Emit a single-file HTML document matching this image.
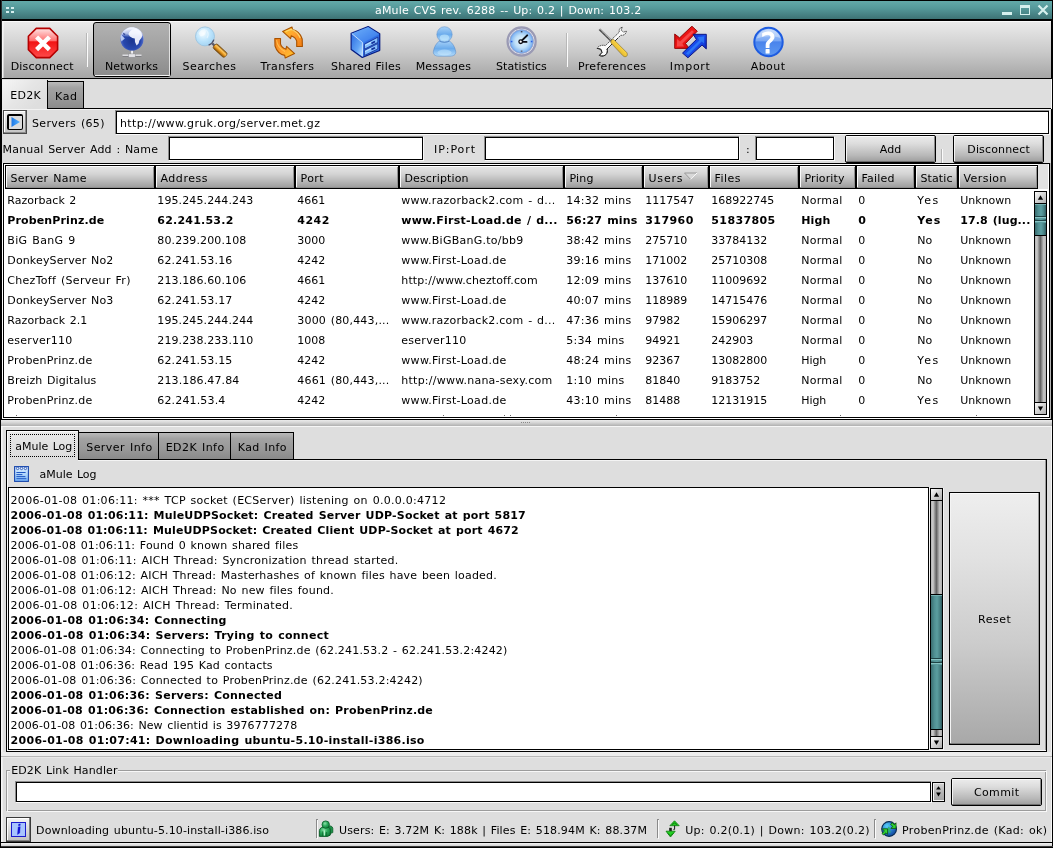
<!DOCTYPE html>
<html><head><meta charset="utf-8"><title>aMule CVS rev. 6288</title>
<style>
html,body{margin:0;padding:0;background:#000;overflow:hidden}
#w{position:relative;will-change:transform;width:1053px;height:848px;overflow:hidden;font-family:"DejaVu Sans","Liberation Sans",sans-serif;font-size:11px;line-height:13px;color:#000}
#w div,#w span.t,#w svg{position:absolute}
#w span.t{white-space:pre;height:13px}
</style></head><body><div id="w">
<div style="left:0px;top:0px;width:1053px;height:848px;background:#000"></div>
<div style="left:2px;top:1px;width:1050px;height:18px;background:linear-gradient(#63a9a9,#55999a 40%,#3d7375)"></div>
<div style="left:6px;top:7px;width:3px;height:2px;background:#d4eeee"></div>
<div style="left:6px;top:11px;width:3px;height:2px;background:#d4eeee"></div>
<div style="left:11px;top:7px;width:3px;height:2px;background:#d4eeee"></div>
<div style="left:11px;top:11px;width:3px;height:2px;background:#d4eeee"></div>
<span class="t" style="left:375.00px;top:4px;letter-spacing:0.187px;word-spacing:1.0px;color:#fff;">aMule CVS rev. 6288 -- Up: 0.2 | Down: 103.2</span>
<div style="left:1002px;top:12px;width:10px;height:3px;background:#d6f0ee"></div>
<div style="left:1020px;top:5px;width:10px;height:10px;box-sizing:border-box;border:1px solid #d6f0ee;border-top-width:3px"></div>
<svg style="left:1037px;top:4px" width="12" height="12" viewBox="0 0 12 12"><path d="M1.5 1.5 L10.5 10.5 M10.5 1.5 L1.5 10.5" stroke="#d6f0ee" stroke-width="2.2" fill="none"/></svg>
<div style="left:2px;top:21px;width:1049px;height:57px;background:linear-gradient(#ebebeb,#e2e2e2 15%,#c9c9c9 55%,#a6a6a6)"></div>
<div style="left:2px;top:21px;width:1049px;height:1px;background:#fafafa"></div>
<div style="left:2px;top:21px;width:1px;height:57px;background:#f4f4f4"></div>
<div style="left:3px;top:22px;width:1px;height:56px;background:rgba(255,255,255,.45)"></div>
<div style="left:1px;top:79px;width:1051px;height:763px;background:#dedede"></div>
<div style="left:1051px;top:79px;width:1px;height:30px;background:#f8f8f8"></div>
<div style="left:1052px;top:79px;width:1px;height:763px;background:#000"></div>
<div style="left:1px;top:79px;width:1px;height:341px;background:#000"></div>
<div style="left:1051px;top:109px;width:1px;height:311px;background:#000"></div>
<div style="left:1051px;top:21px;width:1px;height:58px;background:#000"></div>
<div style="left:93px;top:22px;width:78px;height:55px;box-sizing:border-box;border:1px solid #000;border-radius:3px;background:linear-gradient(#b2b2b2,#a0a0a0 50%,#8b8b8b)"></div>
<div style="left:95px;top:75px;width:74px;height:1px;background:#f2f2f2"></div>
<div style="left:169px;top:24px;width:1px;height:52px;background:#e0e0e0"></div>
<div style="left:86px;top:33px;width:1px;height:34px;background:#b8b8b8"></div>
<div style="left:87px;top:33px;width:1px;height:34px;background:#fbfbfb"></div>
<div style="left:566px;top:33px;width:1px;height:34px;background:#b8b8b8"></div>
<div style="left:567px;top:33px;width:1px;height:34px;background:#fbfbfb"></div>
<span class="t" style="left:10.70px;top:60px;letter-spacing:0.199px;">Disconnect</span>
<span class="t" style="left:104.90px;top:60px;letter-spacing:0.204px;">Networks</span>
<span class="t" style="left:182.50px;top:60px;letter-spacing:0.446px;">Searches</span>
<span class="t" style="left:260.60px;top:60px;letter-spacing:0.431px;">Transfers</span>
<span class="t" style="left:330.90px;top:60px;letter-spacing:0.275px;word-spacing:0.5px;">Shared Files</span>
<span class="t" style="left:415.70px;top:60px;letter-spacing:0.180px;">Messages</span>
<span class="t" style="left:496.10px;top:60px;letter-spacing:0.045px;">Statistics</span>
<span class="t" style="left:577.90px;top:60px;letter-spacing:0.340px;">Preferences</span>
<span class="t" style="left:669.80px;top:60px;letter-spacing:0.717px;">Import</span>
<span class="t" style="left:750.70px;top:60px;letter-spacing:0.442px;">About</span>
<div style="left:2px;top:80px;width:45px;height:29px;background:linear-gradient(135deg,#f6f6f6,#e6e6e6 45%,#dedede 80%)"></div>
<div style="left:47px;top:81px;width:37px;height:28px;box-sizing:border-box;border:1px solid #000;border-bottom:none;background:linear-gradient(#bababa,#a2a2a2 22%,#999 60%,#8a8a8a)"></div>
<div style="left:47px;top:80px;width:1px;height:29px;background:#000"></div>
<div style="left:47px;top:108px;width:1004px;height:1px;background:#000"></div>
<div style="left:2px;top:109px;width:1049px;height:1px;background:#f2f2f2"></div>
<span class="t" style="left:10.20px;top:89px;letter-spacing:0.286px;">ED2K</span>
<span class="t" style="left:55.00px;top:90px;letter-spacing:0.625px;">Kad</span>
<div style="left:3px;top:110px;width:24px;height:24px;box-sizing:border-box;border:1px solid #4a4a4a;background:linear-gradient(#f0f0f0,#c4c4c4)"></div>
<div style="left:4px;top:111px;width:22px;height:1px;background:#fff"></div>
<div style="left:4px;top:111px;width:1px;height:22px;background:#fff"></div>
<div style="left:4px;top:132px;width:22px;height:1px;background:#8c8c8c"></div>
<div style="left:25px;top:111px;width:1px;height:22px;background:#8c8c8c"></div>
<div style="left:7px;top:114px;width:16px;height:16px;box-sizing:border-box;background:#dcdcdc;border:1px solid #000;border-top-width:2px;border-left-width:2px;border-radius:2px"></div>
<svg style="left:10px;top:116px" width="12" height="12" viewBox="0 0 12 12"><defs><linearGradient id="pl" x1="0" y1="0" x2="1" y2="0"><stop offset="0" stop-color="#1e78e6"/><stop offset="1" stop-color="#58b4ff"/></linearGradient></defs><path d="M1.5 1 L10 6 L1.5 11 Z" fill="url(#pl)"/></svg>
<span class="t" style="left:32.00px;top:117px;letter-spacing:0.328px;word-spacing:1.0px;">Servers (65)</span>
<div style="left:115px;top:110px;width:934px;height:1px;background:#8c8c8c"></div>
<div style="left:115px;top:110px;width:1px;height:24px;background:#8c8c8c"></div>
<div style="left:116px;top:134px;width:934px;height:1px;background:#f8f8f8"></div>
<div style="left:1049px;top:111px;width:1px;height:24px;background:#f8f8f8"></div>
<div style="left:116px;top:111px;width:933px;height:23px;box-sizing:border-box;background:#fff;border:1px solid #000"></div>
<span class="t" style="left:120.00px;top:117px;letter-spacing:0.355px;">http://www.gruk.org/server.met.gz</span>
<span class="t" style="left:2.60px;top:143px;letter-spacing:0.166px;word-spacing:1.0px;">Manual Server Add : Name</span>
<div style="left:168px;top:136px;width:255px;height:1px;background:#8c8c8c"></div>
<div style="left:168px;top:136px;width:1px;height:24px;background:#8c8c8c"></div>
<div style="left:169px;top:160px;width:255px;height:1px;background:#f8f8f8"></div>
<div style="left:423px;top:137px;width:1px;height:24px;background:#f8f8f8"></div>
<div style="left:169px;top:137px;width:254px;height:23px;box-sizing:border-box;background:#fff;border:1px solid #000"></div>
<span class="t" style="left:434.00px;top:143px;letter-spacing:0.932px;">IP:Port</span>
<div style="left:484px;top:136px;width:255px;height:1px;background:#8c8c8c"></div>
<div style="left:484px;top:136px;width:1px;height:24px;background:#8c8c8c"></div>
<div style="left:485px;top:160px;width:255px;height:1px;background:#f8f8f8"></div>
<div style="left:739px;top:137px;width:1px;height:24px;background:#f8f8f8"></div>
<div style="left:485px;top:137px;width:254px;height:23px;box-sizing:border-box;background:#fff;border:1px solid #000"></div>
<span class="t" style="left:746.00px;top:143px;letter-spacing:0.000px;">:</span>
<div style="left:755px;top:136px;width:79px;height:1px;background:#8c8c8c"></div>
<div style="left:755px;top:136px;width:1px;height:24px;background:#8c8c8c"></div>
<div style="left:756px;top:160px;width:79px;height:1px;background:#f8f8f8"></div>
<div style="left:834px;top:137px;width:1px;height:24px;background:#f8f8f8"></div>
<div style="left:756px;top:137px;width:78px;height:23px;box-sizing:border-box;background:#fff;border:1px solid #000"></div>
<div style="left:845px;top:135px;width:91px;height:28px;box-sizing:border-box;border:1px solid #000;border-radius:2px;background:linear-gradient(#ececec,#dcdcdc 30%,#b8b8b8 75%,#9c9c9c)"></div>
<div style="left:846px;top:136px;width:89px;height:1px;background:#fbfbfb"></div>
<div style="left:846px;top:136px;width:1px;height:26px;background:#f4f4f4"></div>
<div style="left:846px;top:161px;width:89px;height:1px;background:#6e6e6e"></div>
<div style="left:934px;top:136px;width:1px;height:26px;background:#8a8a8a"></div>
<span class="t" style="left:879.75px;top:143px;letter-spacing:0.094px;">Add</span>
<div style="left:941px;top:149px;width:1px;height:14px;background:#b4b4b4"></div>
<div style="left:942px;top:149px;width:1px;height:14px;background:#fbfbfb"></div>
<div style="left:953px;top:135px;width:91px;height:28px;box-sizing:border-box;border:1px solid #000;border-radius:2px;background:linear-gradient(#ececec,#dcdcdc 30%,#b8b8b8 75%,#9c9c9c)"></div>
<div style="left:954px;top:136px;width:89px;height:1px;background:#fbfbfb"></div>
<div style="left:954px;top:136px;width:1px;height:26px;background:#f4f4f4"></div>
<div style="left:954px;top:161px;width:89px;height:1px;background:#6e6e6e"></div>
<div style="left:1042px;top:136px;width:1px;height:26px;background:#8a8a8a"></div>
<span class="t" style="left:967.25px;top:143px;letter-spacing:0.155px;">Disconnect</span>
<div style="left:1px;top:162px;width:1px;height:258px;background:#000"></div>
<div style="left:1051px;top:162px;width:1px;height:258px;background:#000"></div>
<div style="left:2px;top:163px;width:1049px;height:256px;background:#fff"></div>
<div style="left:1050px;top:163px;width:1px;height:256px;background:#b4b4b4"></div>
<div style="left:3px;top:163px;width:1047px;height:1px;background:#000"></div>
<div style="left:3px;top:163px;width:1px;height:255px;background:#000"></div>
<div style="left:1049px;top:163px;width:1px;height:255px;background:#000"></div>
<div style="left:3px;top:417px;width:1047px;height:1px;background:#000"></div>
<div style="left:0px;top:419px;width:1053px;height:1px;background:#000"></div>
<div style="left:5px;top:165px;width:1033px;height:24px;background:linear-gradient(#000 0,#000 1px,#fbfbfb 1px,#fbfbfb 2px,#e4e4e4 2px,#d4d4d4 9px,#b4b4b4 17px,#9e9e9e 22px,#7c7c7c 23px,#000 23px)"></div>
<div style="left:5px;top:165px;width:1px;height:24px;background:#000"></div>
<div style="left:6px;top:166px;width:1px;height:21px;background:#fbfbfb"></div>
<div style="left:154px;top:165px;width:1px;height:24px;background:#000"></div>
<div style="left:153px;top:167px;width:1px;height:21px;background:#909090"></div>
<span class="t" style="left:10.50px;top:172px;letter-spacing:0.298px;word-spacing:1.0px;">Server Name</span>
<div style="left:155px;top:165px;width:1px;height:24px;background:#000"></div>
<div style="left:156px;top:166px;width:1px;height:21px;background:#fbfbfb"></div>
<div style="left:294px;top:165px;width:1px;height:24px;background:#000"></div>
<div style="left:293px;top:167px;width:1px;height:21px;background:#909090"></div>
<span class="t" style="left:160.50px;top:172px;letter-spacing:0.529px;">Address</span>
<div style="left:295px;top:165px;width:1px;height:24px;background:#000"></div>
<div style="left:296px;top:166px;width:1px;height:21px;background:#fbfbfb"></div>
<div style="left:398px;top:165px;width:1px;height:24px;background:#000"></div>
<div style="left:397px;top:167px;width:1px;height:21px;background:#909090"></div>
<span class="t" style="left:300.50px;top:172px;letter-spacing:0.396px;">Port</span>
<div style="left:399px;top:165px;width:1px;height:24px;background:#000"></div>
<div style="left:400px;top:166px;width:1px;height:21px;background:#fbfbfb"></div>
<div style="left:563px;top:165px;width:1px;height:24px;background:#000"></div>
<div style="left:562px;top:167px;width:1px;height:21px;background:#909090"></div>
<span class="t" style="left:404.50px;top:172px;letter-spacing:0.134px;">Description</span>
<div style="left:564px;top:165px;width:1px;height:24px;background:#000"></div>
<div style="left:565px;top:166px;width:1px;height:21px;background:#fbfbfb"></div>
<div style="left:642px;top:165px;width:1px;height:24px;background:#000"></div>
<div style="left:641px;top:167px;width:1px;height:21px;background:#909090"></div>
<span class="t" style="left:569.50px;top:172px;letter-spacing:0.193px;">Ping</span>
<div style="left:643px;top:165px;width:1px;height:24px;background:#000"></div>
<div style="left:644px;top:166px;width:1px;height:21px;background:#fbfbfb"></div>
<div style="left:708px;top:165px;width:1px;height:24px;background:#000"></div>
<div style="left:707px;top:167px;width:1px;height:21px;background:#909090"></div>
<span class="t" style="left:648.50px;top:172px;letter-spacing:0.801px;">Users</span>
<div style="left:709px;top:165px;width:1px;height:24px;background:#000"></div>
<div style="left:710px;top:166px;width:1px;height:21px;background:#fbfbfb"></div>
<div style="left:798px;top:165px;width:1px;height:24px;background:#000"></div>
<div style="left:797px;top:167px;width:1px;height:21px;background:#909090"></div>
<span class="t" style="left:714.50px;top:172px;letter-spacing:0.461px;">Files</span>
<div style="left:799px;top:165px;width:1px;height:24px;background:#000"></div>
<div style="left:800px;top:166px;width:1px;height:21px;background:#fbfbfb"></div>
<div style="left:855px;top:165px;width:1px;height:24px;background:#000"></div>
<div style="left:854px;top:167px;width:1px;height:21px;background:#909090"></div>
<span class="t" style="left:804.50px;top:172px;letter-spacing:0.118px;">Priority</span>
<div style="left:856px;top:165px;width:1px;height:24px;background:#000"></div>
<div style="left:857px;top:166px;width:1px;height:21px;background:#fbfbfb"></div>
<div style="left:914px;top:165px;width:1px;height:24px;background:#000"></div>
<div style="left:913px;top:167px;width:1px;height:21px;background:#909090"></div>
<span class="t" style="left:861.50px;top:172px;letter-spacing:0.216px;">Failed</span>
<div style="left:915px;top:165px;width:1px;height:24px;background:#000"></div>
<div style="left:916px;top:166px;width:1px;height:21px;background:#fbfbfb"></div>
<div style="left:957px;top:165px;width:1px;height:24px;background:#000"></div>
<div style="left:956px;top:167px;width:1px;height:21px;background:#909090"></div>
<span class="t" style="left:920.50px;top:172px;letter-spacing:0.109px;">Static</span>
<div style="left:958px;top:165px;width:1px;height:24px;background:#000"></div>
<div style="left:959px;top:166px;width:1px;height:21px;background:#fbfbfb"></div>
<div style="left:1037px;top:165px;width:1px;height:24px;background:#000"></div>
<div style="left:1036px;top:167px;width:1px;height:21px;background:#909090"></div>
<span class="t" style="left:963.50px;top:172px;letter-spacing:0.424px;">Version</span>
<svg style="left:683px;top:172px" width="16" height="9" viewBox="0 0 16 9"><path d="M1.5 1 L14 1 L7.7 7.5 Z" fill="#d8d8d8" stroke="#9a9a9a" stroke-width="1"/><path d="M14 1 L7.7 7.5" stroke="#fff" stroke-width="1" fill="none"/></svg>
<span class="t" style="left:7.30px;top:194px;letter-spacing:0.019px;word-spacing:1.0px;">Razorback 2</span>
<span class="t" style="left:157.30px;top:194px;letter-spacing:0.107px;">195.245.244.243</span>
<span class="t" style="left:297.30px;top:194px;letter-spacing:0.000px;">4661</span>
<span class="t" style="left:401.30px;top:194px;letter-spacing:0.235px;word-spacing:1.0px;">www.razorback2.com - d...</span>
<span class="t" style="left:566.30px;top:194px;letter-spacing:0.257px;word-spacing:1.0px;">14:32 mins</span>
<span class="t" style="left:645.30px;top:194px;letter-spacing:0.000px;">1117547</span>
<span class="t" style="left:711.30px;top:194px;letter-spacing:0.000px;">168922745</span>
<span class="t" style="left:801.30px;top:194px;letter-spacing:0.237px;">Normal</span>
<span class="t" style="left:858.30px;top:194px;letter-spacing:0.000px;">0</span>
<span class="t" style="left:917.30px;top:194px;letter-spacing:1.617px;">Yes</span>
<span class="t" style="left:960.30px;top:194px;letter-spacing:-0.010px;">Unknown</span>
<span class="t" style="left:7.30px;top:214px;letter-spacing:0.139px;font-weight:bold;">ProbenPrinz.de</span>
<span class="t" style="left:157.30px;top:214px;letter-spacing:0.223px;font-weight:bold;">62.241.53.2</span>
<span class="t" style="left:297.30px;top:214px;letter-spacing:0.458px;font-weight:bold;">4242</span>
<span class="t" style="left:401.30px;top:214px;letter-spacing:0.241px;word-spacing:1.0px;font-weight:bold;">www.First-Load.de / d...</span>
<span class="t" style="left:566.30px;top:214px;letter-spacing:0.170px;word-spacing:1.0px;font-weight:bold;">56:27 mins</span>
<span class="t" style="left:645.30px;top:214px;letter-spacing:0.412px;font-weight:bold;">317960</span>
<span class="t" style="left:711.30px;top:214px;letter-spacing:0.393px;font-weight:bold;">51837805</span>
<span class="t" style="left:801.30px;top:214px;letter-spacing:0.109px;font-weight:bold;">High</span>
<span class="t" style="left:858.30px;top:214px;letter-spacing:0.000px;font-weight:bold;">0</span>
<span class="t" style="left:917.30px;top:214px;letter-spacing:1.023px;font-weight:bold;">Yes</span>
<span class="t" style="left:960.30px;top:214px;letter-spacing:0.092px;word-spacing:1.0px;font-weight:bold;">17.8 (lug...</span>
<span class="t" style="left:7.30px;top:234px;letter-spacing:0.342px;word-spacing:1.0px;">BiG BanG 9</span>
<span class="t" style="left:157.30px;top:234px;letter-spacing:0.115px;">80.239.200.108</span>
<span class="t" style="left:297.30px;top:234px;letter-spacing:0.000px;">3000</span>
<span class="t" style="left:401.30px;top:234px;letter-spacing:0.257px;">www.BiGBanG.to/bb9</span>
<span class="t" style="left:566.30px;top:234px;letter-spacing:0.257px;word-spacing:1.0px;">38:42 mins</span>
<span class="t" style="left:645.30px;top:234px;letter-spacing:0.000px;">275710</span>
<span class="t" style="left:711.30px;top:234px;letter-spacing:0.000px;">33784132</span>
<span class="t" style="left:801.30px;top:234px;letter-spacing:0.237px;">Normal</span>
<span class="t" style="left:858.30px;top:234px;letter-spacing:0.000px;">0</span>
<span class="t" style="left:917.30px;top:234px;letter-spacing:0.031px;">No</span>
<span class="t" style="left:960.30px;top:234px;letter-spacing:-0.010px;">Unknown</span>
<span class="t" style="left:7.30px;top:254px;letter-spacing:0.135px;word-spacing:1.0px;">DonkeyServer No2</span>
<span class="t" style="left:157.30px;top:254px;letter-spacing:0.136px;">62.241.53.16</span>
<span class="t" style="left:297.30px;top:254px;letter-spacing:0.000px;">4242</span>
<span class="t" style="left:401.30px;top:254px;letter-spacing:0.297px;">www.First-Load.de</span>
<span class="t" style="left:566.30px;top:254px;letter-spacing:0.257px;word-spacing:1.0px;">39:16 mins</span>
<span class="t" style="left:645.30px;top:254px;letter-spacing:0.000px;">171002</span>
<span class="t" style="left:711.30px;top:254px;letter-spacing:0.000px;">25710308</span>
<span class="t" style="left:801.30px;top:254px;letter-spacing:0.237px;">Normal</span>
<span class="t" style="left:858.30px;top:254px;letter-spacing:0.000px;">0</span>
<span class="t" style="left:917.30px;top:254px;letter-spacing:0.031px;">No</span>
<span class="t" style="left:960.30px;top:254px;letter-spacing:-0.010px;">Unknown</span>
<span class="t" style="left:7.30px;top:274px;letter-spacing:0.298px;word-spacing:1.0px;">ChezToff (Serveur Fr)</span>
<span class="t" style="left:157.30px;top:274px;letter-spacing:0.115px;">213.186.60.106</span>
<span class="t" style="left:297.30px;top:274px;letter-spacing:0.000px;">4661</span>
<span class="t" style="left:401.30px;top:274px;letter-spacing:0.120px;">http://www.cheztoff.com</span>
<span class="t" style="left:566.30px;top:274px;letter-spacing:0.257px;word-spacing:1.0px;">12:09 mins</span>
<span class="t" style="left:645.30px;top:274px;letter-spacing:0.000px;">137610</span>
<span class="t" style="left:711.30px;top:274px;letter-spacing:0.000px;">11009692</span>
<span class="t" style="left:801.30px;top:274px;letter-spacing:0.237px;">Normal</span>
<span class="t" style="left:858.30px;top:274px;letter-spacing:0.000px;">0</span>
<span class="t" style="left:917.30px;top:274px;letter-spacing:0.031px;">No</span>
<span class="t" style="left:960.30px;top:274px;letter-spacing:-0.010px;">Unknown</span>
<span class="t" style="left:7.30px;top:294px;letter-spacing:0.135px;word-spacing:1.0px;">DonkeyServer No3</span>
<span class="t" style="left:157.30px;top:294px;letter-spacing:0.136px;">62.241.53.17</span>
<span class="t" style="left:297.30px;top:294px;letter-spacing:0.000px;">4242</span>
<span class="t" style="left:401.30px;top:294px;letter-spacing:0.297px;">www.First-Load.de</span>
<span class="t" style="left:566.30px;top:294px;letter-spacing:0.257px;word-spacing:1.0px;">40:07 mins</span>
<span class="t" style="left:645.30px;top:294px;letter-spacing:0.000px;">118989</span>
<span class="t" style="left:711.30px;top:294px;letter-spacing:0.000px;">14715476</span>
<span class="t" style="left:801.30px;top:294px;letter-spacing:0.237px;">Normal</span>
<span class="t" style="left:858.30px;top:294px;letter-spacing:0.000px;">0</span>
<span class="t" style="left:917.30px;top:294px;letter-spacing:0.031px;">No</span>
<span class="t" style="left:960.30px;top:294px;letter-spacing:-0.010px;">Unknown</span>
<span class="t" style="left:7.30px;top:314px;letter-spacing:0.057px;word-spacing:1.0px;">Razorback 2.1</span>
<span class="t" style="left:157.30px;top:314px;letter-spacing:0.107px;">195.245.244.244</span>
<span class="t" style="left:297.30px;top:314px;letter-spacing:0.180px;word-spacing:1.0px;">3000 (80,443,...</span>
<span class="t" style="left:401.30px;top:314px;letter-spacing:0.235px;word-spacing:1.0px;">www.razorback2.com - d...</span>
<span class="t" style="left:566.30px;top:314px;letter-spacing:0.257px;word-spacing:1.0px;">47:36 mins</span>
<span class="t" style="left:645.30px;top:314px;letter-spacing:0.000px;">97982</span>
<span class="t" style="left:711.30px;top:314px;letter-spacing:0.000px;">15906297</span>
<span class="t" style="left:801.30px;top:314px;letter-spacing:0.237px;">Normal</span>
<span class="t" style="left:858.30px;top:314px;letter-spacing:0.000px;">0</span>
<span class="t" style="left:917.30px;top:314px;letter-spacing:0.031px;">No</span>
<span class="t" style="left:960.30px;top:314px;letter-spacing:-0.010px;">Unknown</span>
<span class="t" style="left:7.30px;top:334px;letter-spacing:0.269px;">eserver110</span>
<span class="t" style="left:157.30px;top:334px;letter-spacing:0.107px;">219.238.233.110</span>
<span class="t" style="left:297.30px;top:334px;letter-spacing:0.000px;">1008</span>
<span class="t" style="left:401.30px;top:334px;letter-spacing:0.269px;">eserver110</span>
<span class="t" style="left:566.30px;top:334px;letter-spacing:0.289px;word-spacing:1.0px;">5:34 mins</span>
<span class="t" style="left:645.30px;top:334px;letter-spacing:0.000px;">94921</span>
<span class="t" style="left:711.30px;top:334px;letter-spacing:0.000px;">242903</span>
<span class="t" style="left:801.30px;top:334px;letter-spacing:0.237px;">Normal</span>
<span class="t" style="left:858.30px;top:334px;letter-spacing:0.000px;">0</span>
<span class="t" style="left:917.30px;top:334px;letter-spacing:0.031px;">No</span>
<span class="t" style="left:960.30px;top:334px;letter-spacing:-0.010px;">Unknown</span>
<span class="t" style="left:7.30px;top:354px;letter-spacing:0.214px;">ProbenPrinz.de</span>
<span class="t" style="left:157.30px;top:354px;letter-spacing:0.136px;">62.241.53.15</span>
<span class="t" style="left:297.30px;top:354px;letter-spacing:0.000px;">4242</span>
<span class="t" style="left:401.30px;top:354px;letter-spacing:0.297px;">www.First-Load.de</span>
<span class="t" style="left:566.30px;top:354px;letter-spacing:0.257px;word-spacing:1.0px;">48:24 mins</span>
<span class="t" style="left:645.30px;top:354px;letter-spacing:0.000px;">92367</span>
<span class="t" style="left:711.30px;top:354px;letter-spacing:0.000px;">13082800</span>
<span class="t" style="left:801.30px;top:354px;letter-spacing:-0.094px;">High</span>
<span class="t" style="left:858.30px;top:354px;letter-spacing:0.000px;">0</span>
<span class="t" style="left:917.30px;top:354px;letter-spacing:1.617px;">Yes</span>
<span class="t" style="left:960.30px;top:354px;letter-spacing:-0.010px;">Unknown</span>
<span class="t" style="left:7.30px;top:374px;letter-spacing:0.114px;word-spacing:1.0px;">Breizh Digitalus</span>
<span class="t" style="left:157.30px;top:374px;letter-spacing:0.125px;">213.186.47.84</span>
<span class="t" style="left:297.30px;top:374px;letter-spacing:0.180px;word-spacing:1.0px;">4661 (80,443,...</span>
<span class="t" style="left:401.30px;top:374px;letter-spacing:0.247px;">http://www.nana-sexy.com</span>
<span class="t" style="left:566.30px;top:374px;letter-spacing:0.289px;word-spacing:1.0px;">1:10 mins</span>
<span class="t" style="left:645.30px;top:374px;letter-spacing:0.000px;">81840</span>
<span class="t" style="left:711.30px;top:374px;letter-spacing:0.000px;">9183752</span>
<span class="t" style="left:801.30px;top:374px;letter-spacing:0.237px;">Normal</span>
<span class="t" style="left:858.30px;top:374px;letter-spacing:0.000px;">0</span>
<span class="t" style="left:917.30px;top:374px;letter-spacing:0.031px;">No</span>
<span class="t" style="left:960.30px;top:374px;letter-spacing:-0.010px;">Unknown</span>
<span class="t" style="left:7.30px;top:394px;letter-spacing:0.214px;">ProbenPrinz.de</span>
<span class="t" style="left:157.30px;top:394px;letter-spacing:0.150px;">62.241.53.4</span>
<span class="t" style="left:297.30px;top:394px;letter-spacing:0.000px;">4242</span>
<span class="t" style="left:401.30px;top:394px;letter-spacing:0.297px;">www.First-Load.de</span>
<span class="t" style="left:566.30px;top:394px;letter-spacing:0.257px;word-spacing:1.0px;">43:10 mins</span>
<span class="t" style="left:645.30px;top:394px;letter-spacing:0.000px;">81488</span>
<span class="t" style="left:711.30px;top:394px;letter-spacing:0.000px;">12131915</span>
<span class="t" style="left:801.30px;top:394px;letter-spacing:-0.094px;">High</span>
<span class="t" style="left:858.30px;top:394px;letter-spacing:0.000px;">0</span>
<span class="t" style="left:917.30px;top:394px;letter-spacing:1.617px;">Yes</span>
<span class="t" style="left:960.30px;top:394px;letter-spacing:-0.010px;">Unknown</span>
<div style="left:1038px;top:164px;width:10px;height:25px;background:#e2e2e2"></div>
<div style="left:1034px;top:191px;width:13px;height:224px;box-sizing:border-box;border:1px solid #000;background:linear-gradient(90deg,#b4b4b4,#cccccc 18%,#8a8a8a 36%,#646464 50%,#8c8c8c 62%,#c6c6c6 80%,#b0b0b0)"></div>
<div style="left:1035px;top:192px;width:11px;height:11px;background:linear-gradient(135deg,#fafafa,#d6d6d6 45%,#b0b0b0)"></div>
<svg style="left:1035px;top:192px" width="11" height="11" viewBox="0 0 11 11"><polygon points="2.9,7.8 8.1,7.8 5.5,3.2" fill="#000"/></svg>
<div style="left:1035px;top:403px;width:11px;height:11px;background:linear-gradient(135deg,#fafafa,#d6d6d6 45%,#b0b0b0)"></div>
<svg style="left:1035px;top:403px" width="11" height="11" viewBox="0 0 11 11"><polygon points="2.9,3.6 8.1,3.6 5.5,8.1" fill="#000"/></svg>
<div style="left:1035px;top:203px;width:11px;height:1px;background:#000"></div>
<div style="left:1035px;top:402px;width:11px;height:1px;background:#000"></div>
<div style="left:1035px;top:204px;width:11px;height:31px;background:linear-gradient(90deg,#3a6c6f,#4f8f92 30%,#5b9ea0 55%,#488285 80%,#305a5d)"></div>
<div style="left:1035px;top:203px;width:11px;height:1px;background:#000"></div>
<div style="left:1035px;top:235px;width:11px;height:1px;background:#000"></div>
<div style="left:1035px;top:204px;width:11px;height:1px;background:#74b0b0"></div>
<div style="left:1035px;top:216px;width:11px;height:1px;background:#1f4446"></div>
<div style="left:1035px;top:217px;width:11px;height:1px;background:#86c2c2"></div>
<div style="left:1035px;top:218px;width:11px;height:1px;background:#5a9a9c"></div>
<div style="left:1035px;top:220px;width:11px;height:1px;background:#1f4446"></div>
<div style="left:1035px;top:221px;width:11px;height:1px;background:#86c2c2"></div>
<div style="left:1035px;top:222px;width:11px;height:1px;background:#5a9a9c"></div>
<div style="left:16px;top:415px;width:1px;height:1px;background:#666"></div>
<div style="left:443px;top:415px;width:1px;height:1px;background:#666"></div>
<div style="left:504px;top:415px;width:1px;height:1px;background:#666"></div>
<div style="left:510px;top:415px;width:1px;height:1px;background:#666"></div>
<div style="left:616px;top:415px;width:1px;height:1px;background:#666"></div>
<div style="left:840px;top:415px;width:1px;height:1px;background:#666"></div>
<div style="left:976px;top:415px;width:1px;height:1px;background:#666"></div>
<div style="left:1px;top:420px;width:1px;height:422px;background:#f6f6f6"></div>
<div style="left:2px;top:426px;width:1px;height:416px;background:#ececec"></div>
<div style="left:1051px;top:420px;width:1px;height:422px;background:#f6f6f6"></div>
<div style="left:1px;top:420px;width:1051px;height:6px;background:linear-gradient(#ececec,#d8d8d8 40%,#b0b0b0)"></div>
<div style="left:1px;top:426px;width:1051px;height:1px;background:#f6f6f6"></div>
<div style="left:521px;top:422px;width:1px;height:1px;background:#8a8a8a"></div>
<div style="left:523px;top:422px;width:1px;height:1px;background:#8a8a8a"></div>
<div style="left:525px;top:422px;width:1px;height:1px;background:#8a8a8a"></div>
<div style="left:527px;top:422px;width:1px;height:1px;background:#8a8a8a"></div>
<div style="left:529px;top:422px;width:1px;height:1px;background:#8a8a8a"></div>
<div style="left:6px;top:430px;width:1px;height:322px;background:#000"></div>
<div style="left:7px;top:431px;width:1px;height:320px;background:#fafafa"></div>
<div style="left:78px;top:459px;width:969px;height:1px;background:#000"></div>
<div style="left:78px;top:460px;width:968px;height:1px;background:#f4f4f4"></div>
<div style="left:1046px;top:459px;width:1px;height:293px;background:#000"></div>
<div style="left:1045px;top:460px;width:1px;height:291px;background:#9a9a9a"></div>
<div style="left:6px;top:751px;width:1041px;height:1px;background:#000"></div>
<div style="left:7px;top:750px;width:1039px;height:1px;background:#f6f6f6"></div>
<div style="left:1px;top:752px;width:1051px;height:4px;background:#ececec"></div>
<div style="left:6px;top:430px;width:73px;height:30px;box-sizing:border-box;border:1px solid #000;border-bottom:none;background:linear-gradient(#eaeaea,#e2e2e2 40%,#dedede 85%)"></div>
<div style="left:7px;top:431px;width:1px;height:30px;background:#fbfbfb"></div>
<div style="left:7px;top:431px;width:71px;height:1px;background:#fbfbfb"></div>
<div style="left:10px;top:434px;width:65px;height:23px;box-sizing:border-box;border:1px dotted #000"></div>
<span class="t" style="left:15.30px;top:440px;letter-spacing:-0.021px;word-spacing:1.0px;">aMule Log</span>
<div style="left:79px;top:432px;width:80px;height:28px;box-sizing:border-box;border:1px solid #000;border-left:none;background:linear-gradient(#bababa,#a2a2a2 22%,#999 60%,#8a8a8a)"></div>
<span class="t" style="left:86.20px;top:441px;letter-spacing:0.461px;word-spacing:1.0px;">Server Info</span>
<div style="left:159px;top:432px;width:72px;height:28px;box-sizing:border-box;border:1px solid #000;border-left:none;background:linear-gradient(#bababa,#a2a2a2 22%,#999 60%,#8a8a8a)"></div>
<span class="t" style="left:165.70px;top:441px;letter-spacing:0.441px;word-spacing:1.0px;">ED2K Info</span>
<div style="left:231px;top:432px;width:63px;height:28px;box-sizing:border-box;border:1px solid #000;border-left:none;background:linear-gradient(#bababa,#a2a2a2 22%,#999 60%,#8a8a8a)"></div>
<span class="t" style="left:237.80px;top:441px;letter-spacing:0.389px;word-spacing:1.0px;">Kad Info</span>
<div style="left:78px;top:432px;width:1px;height:28px;background:#000"></div>
<svg style="left:14px;top:466px" width="16" height="16" viewBox="0 0 16 16">
<defs><linearGradient id="gNote" x1="0" y1="0" x2="0" y2="1"><stop offset="0" stop-color="#e2f1ff"/><stop offset=".5" stop-color="#b4d8fc"/><stop offset="1" stop-color="#74b2f6"/></linearGradient></defs>
<rect x="0.6" y="0.6" width="13.8" height="14.8" fill="url(#gNote)" stroke="#1a48ac" stroke-width="1.1"/>
<g stroke="#1a48ac" fill="#eaf4ff" stroke-width="0.8"><circle cx="3.6" cy="2.4" r="1.25"/><circle cx="7.5" cy="2.4" r="1.25"/><circle cx="11.4" cy="2.4" r="1.25"/></g>
<g stroke="#2058c4" stroke-width="1"><path d="M2.4 6.5H11.6M2.4 8.6H8.4M2.4 10.6H11.4M2.4 12.7H12.4"/></g></svg>
<span class="t" style="left:39.50px;top:468px;letter-spacing:-0.021px;word-spacing:1.0px;">aMule Log</span>
<div style="left:8px;top:487px;width:921px;height:263px;box-sizing:border-box;background:#fff;border:1px solid #000"></div>
<div style="left:929px;top:487px;width:1px;height:263px;background:#f4f4f4"></div>
<div style="left:943px;top:488px;width:1px;height:262px;background:#f4f4f4"></div>
<span class="t" style="left:10.60px;top:494px;letter-spacing:0.278px;word-spacing:1.0px;">2006-01-08 01:06:11: *** TCP socket (ECServer) listening on 0.0.0.0:4712</span>
<span class="t" style="left:10.60px;top:509px;letter-spacing:0.182px;word-spacing:1.0px;font-weight:bold;">2006-01-08 01:06:11: MuleUDPSocket: Created Server UDP-Socket at port 5817</span>
<span class="t" style="left:10.60px;top:524px;letter-spacing:0.150px;word-spacing:1.0px;font-weight:bold;">2006-01-08 01:06:11: MuleUDPSocket: Created Client UDP-Socket at port 4672</span>
<span class="t" style="left:10.60px;top:539px;letter-spacing:0.151px;word-spacing:1.0px;">2006-01-08 01:06:11: Found 0 known shared files</span>
<span class="t" style="left:10.60px;top:554px;letter-spacing:0.232px;word-spacing:1.0px;">2006-01-08 01:06:11: AICH Thread: Syncronization thread started.</span>
<span class="t" style="left:10.60px;top:569px;letter-spacing:0.187px;word-spacing:1.0px;">2006-01-08 01:06:12: AICH Thread: Masterhashes of known files have been loaded.</span>
<span class="t" style="left:10.60px;top:584px;letter-spacing:0.203px;word-spacing:1.0px;">2006-01-08 01:06:12: AICH Thread: No new files found.</span>
<span class="t" style="left:10.60px;top:599px;letter-spacing:0.302px;word-spacing:1.0px;">2006-01-08 01:06:12: AICH Thread: Terminated.</span>
<span class="t" style="left:10.60px;top:614px;letter-spacing:0.220px;word-spacing:1.0px;font-weight:bold;">2006-01-08 01:06:34: Connecting</span>
<span class="t" style="left:10.60px;top:629px;letter-spacing:0.273px;word-spacing:1.0px;font-weight:bold;">2006-01-08 01:06:34: Servers: Trying to connect</span>
<span class="t" style="left:10.60px;top:644px;letter-spacing:0.189px;word-spacing:1.0px;">2006-01-08 01:06:34: Connecting to ProbenPrinz.de (62.241.53.2 - 62.241.53.2:4242)</span>
<span class="t" style="left:10.60px;top:659px;letter-spacing:0.151px;word-spacing:1.0px;">2006-01-08 01:06:36: Read 195 Kad contacts</span>
<span class="t" style="left:10.60px;top:674px;letter-spacing:0.202px;word-spacing:1.0px;">2006-01-08 01:06:36: Connected to ProbenPrinz.de (62.241.53.2:4242)</span>
<span class="t" style="left:10.60px;top:689px;letter-spacing:0.251px;word-spacing:1.0px;font-weight:bold;">2006-01-08 01:06:36: Servers: Connected</span>
<span class="t" style="left:10.60px;top:704px;letter-spacing:0.198px;word-spacing:1.0px;font-weight:bold;">2006-01-08 01:06:36: Connection established on: ProbenPrinz.de</span>
<span class="t" style="left:10.60px;top:719px;letter-spacing:0.087px;word-spacing:1.0px;">2006-01-08 01:06:36: New clientid is 3976777278</span>
<span class="t" style="left:10.60px;top:734px;letter-spacing:0.277px;word-spacing:1.0px;font-weight:bold;">2006-01-08 01:07:41: Downloading ubuntu-5.10-install-i386.iso</span>
<div style="left:930px;top:488px;width:13px;height:261px;box-sizing:border-box;border:1px solid #000;background:linear-gradient(90deg,#b4b4b4,#cccccc 18%,#8a8a8a 36%,#646464 50%,#8c8c8c 62%,#c6c6c6 80%,#b0b0b0)"></div>
<div style="left:931px;top:489px;width:11px;height:11px;background:linear-gradient(135deg,#fafafa,#d6d6d6 45%,#b0b0b0)"></div>
<svg style="left:931px;top:489px" width="11" height="11" viewBox="0 0 11 11"><polygon points="2.9,7.8 8.1,7.8 5.5,3.2" fill="#000"/></svg>
<div style="left:931px;top:737px;width:11px;height:11px;background:linear-gradient(135deg,#fafafa,#d6d6d6 45%,#b0b0b0)"></div>
<svg style="left:931px;top:737px" width="11" height="11" viewBox="0 0 11 11"><polygon points="2.9,3.6 8.1,3.6 5.5,8.1" fill="#000"/></svg>
<div style="left:931px;top:500px;width:11px;height:1px;background:#000"></div>
<div style="left:931px;top:736px;width:11px;height:1px;background:#000"></div>
<div style="left:931px;top:595px;width:11px;height:134px;background:linear-gradient(90deg,#3a6c6f,#4f8f92 30%,#5b9ea0 55%,#488285 80%,#305a5d)"></div>
<div style="left:931px;top:594px;width:11px;height:1px;background:#000"></div>
<div style="left:931px;top:729px;width:11px;height:1px;background:#000"></div>
<div style="left:931px;top:595px;width:11px;height:1px;background:#74b0b0"></div>
<div style="left:931px;top:658px;width:11px;height:1px;background:#1f4446"></div>
<div style="left:931px;top:659px;width:11px;height:1px;background:#86c2c2"></div>
<div style="left:931px;top:660px;width:11px;height:1px;background:#5a9a9c"></div>
<div style="left:931px;top:662px;width:11px;height:1px;background:#1f4446"></div>
<div style="left:931px;top:663px;width:11px;height:1px;background:#86c2c2"></div>
<div style="left:931px;top:664px;width:11px;height:1px;background:#5a9a9c"></div>
<div style="left:949px;top:492px;width:91px;height:253px;box-sizing:border-box;border:1px solid #000;background:linear-gradient(#eeeeee,#e2e2e2 25%,#cccccc 60%,#a8a8a8)"></div>
<div style="left:950px;top:493px;width:89px;height:1px;background:#fbfbfb"></div>
<div style="left:950px;top:493px;width:1px;height:251px;background:#f4f4f4"></div>
<div style="left:950px;top:743px;width:89px;height:1px;background:#7a7a7a"></div>
<div style="left:1038px;top:493px;width:1px;height:251px;background:#9a9a9a"></div>
<span class="t" style="left:978.10px;top:613px;letter-spacing:0.495px;">Reset</span>
<div style="left:1px;top:756px;width:1051px;height:1px;background:#b8b8b8"></div>
<div style="left:3px;top:757px;width:1047px;height:1px;background:#e8e8e8"></div>
<div style="left:6px;top:770px;width:1040px;height:41px;box-sizing:border-box;border:1px solid #9c9c9c"></div>
<div style="left:7px;top:771px;width:1040px;height:41px;box-sizing:border-box;border:1px solid #f8f8f8;border-right:none;border-bottom:none"></div>
<div style="left:7px;top:811px;width:1040px;height:1px;background:#f8f8f8"></div>
<div style="left:1046px;top:771px;width:1px;height:41px;background:#f8f8f8"></div>
<div style="left:10px;top:764px;width:108px;height:13px;background:#dedede"></div>
<span class="t" style="left:11.20px;top:764px;letter-spacing:0.114px;word-spacing:1.0px;">ED2K Link Handler</span>
<div style="left:15px;top:781px;width:916px;height:1px;background:#8c8c8c"></div>
<div style="left:15px;top:781px;width:1px;height:21px;background:#8c8c8c"></div>
<div style="left:16px;top:802px;width:916px;height:1px;background:#f8f8f8"></div>
<div style="left:931px;top:782px;width:1px;height:21px;background:#f8f8f8"></div>
<div style="left:16px;top:782px;width:915px;height:20px;box-sizing:border-box;background:#fff;border:1px solid #000"></div>
<div style="left:932px;top:782px;width:13px;height:20px;box-sizing:border-box;border:1px solid #000;background:linear-gradient(#d4d4d4,#b4b4b4 50%,#a2a2a2)"></div>
<div style="left:933px;top:783px;width:1px;height:18px;background:#f6f6f6"></div>
<div style="left:933px;top:783px;width:11px;height:1px;background:#eaeaea"></div>
<div style="left:933px;top:800px;width:11px;height:1px;background:#f6f6f6"></div>
<svg style="left:933px;top:783px" width="11" height="18" viewBox="0 0 11 18"><polygon points="3.1,6.5 7.9,6.5 5.5,3.2" fill="#000"/><polygon points="3.1,9.5 7.9,9.5 5.5,13.6" fill="#000"/></svg>
<div style="left:951px;top:778px;width:91px;height:28px;box-sizing:border-box;border:1px solid #000;border-radius:2px;background:linear-gradient(#ececec,#dcdcdc 30%,#b8b8b8 75%,#9c9c9c)"></div>
<div style="left:952px;top:779px;width:89px;height:1px;background:#fbfbfb"></div>
<div style="left:952px;top:779px;width:1px;height:26px;background:#f4f4f4"></div>
<div style="left:952px;top:804px;width:89px;height:1px;background:#6e6e6e"></div>
<div style="left:1040px;top:779px;width:1px;height:26px;background:#8a8a8a"></div>
<span class="t" style="left:974.00px;top:786px;letter-spacing:0.353px;">Commit</span>
<div style="left:6px;top:817px;width:25px;height:25px;box-sizing:border-box;border:1px solid #3a3a3a;background:linear-gradient(#f4f4f4,#c0c0c0)"></div>
<div style="left:7px;top:818px;width:23px;height:1px;background:#fff"></div>
<div style="left:7px;top:818px;width:1px;height:23px;background:#fff"></div>
<div style="left:7px;top:840px;width:23px;height:1px;background:#808080"></div>
<div style="left:29px;top:818px;width:1px;height:23px;background:#808080"></div>
<div style="left:11px;top:822px;width:15px;height:15px;box-sizing:border-box;border:1px solid #1a1acc;background:#a8c4fe"></div>
<svg style="left:11px;top:822px" width="15" height="15" viewBox="0 0 15 15"><path d="M7.7 2.1 L9.3 1.9 L9.1 3.6 L7.5 3.8 Z M7.2 5 L9.2 4.7 L8.7 11 L6.5 12.5 Z" fill="#1212d4" stroke="#1212d4" stroke-width=".4" stroke-linejoin="round"/></svg>
<span class="t" style="left:36.10px;top:824px;letter-spacing:0.130px;word-spacing:1.0px;">Downloading ubuntu-5.10-install-i386.iso</span>
<div style="left:316px;top:819px;width:1px;height:19px;background:#8a8a8a"></div>
<div style="left:317px;top:820px;width:1px;height:19px;background:#fbfbfb"></div>
<div style="left:316px;top:819px;width:2px;height:1px;background:#8a8a8a"></div>
<div style="left:657px;top:819px;width:1px;height:19px;background:#8a8a8a"></div>
<div style="left:658px;top:820px;width:1px;height:19px;background:#fbfbfb"></div>
<div style="left:657px;top:819px;width:2px;height:1px;background:#8a8a8a"></div>
<div style="left:874px;top:819px;width:1px;height:19px;background:#8a8a8a"></div>
<div style="left:875px;top:820px;width:1px;height:19px;background:#fbfbfb"></div>
<div style="left:874px;top:819px;width:2px;height:1px;background:#8a8a8a"></div>
<span class="t" style="left:339.00px;top:824px;letter-spacing:0.140px;word-spacing:1.0px;">Users: E: 3.72M K: 188k | Files E: 518.94M K: 88.37M</span>
<span class="t" style="left:685.20px;top:824px;letter-spacing:0.260px;word-spacing:1.0px;">Up: 0.2(0.1) | Down: 103.2(0.2)</span>
<span class="t" style="left:902.00px;top:824px;letter-spacing:0.332px;word-spacing:1.0px;">ProbenPrinz.de (Kad: ok)</span>
<div style="left:0px;top:842px;width:1053px;height:1px;background:#000"></div>
<div style="left:1px;top:843px;width:1051px;height:3px;background:linear-gradient(#f4f4f4,#d0d0d0)"></div>
<div style="left:0px;top:846px;width:1053px;height:1px;background:#3a3a3a"></div>
<div style="left:0px;top:847px;width:1053px;height:1px;background:#000"></div>
<div style="left:0px;top:0px;width:1px;height:848px;background:#000"></div>
<div style="left:1px;top:0px;width:1px;height:79px;background:#2a2a2a"></div>
<svg width="0" height="0" style="left:0;top:0"><defs><linearGradient id="gRed" x1="0" y1="0" x2="0" y2="1"><stop offset="0" stop-color="#ffe4e4"/><stop offset=".42" stop-color="#ff7070"/><stop offset=".46" stop-color="#f21414"/><stop offset="1" stop-color="#ff4a4a"/></linearGradient><radialGradient id="gGlobe" cx=".45" cy=".2" r=".95"><stop offset="0" stop-color="#f4f7ff"/><stop offset=".35" stop-color="#8aa2e0"/><stop offset=".6" stop-color="#2746a8"/><stop offset=".85" stop-color="#1d3594"/><stop offset="1" stop-color="#8c9cd8"/></radialGradient><radialGradient id="gLens" cx=".4" cy=".35" r=".7"><stop offset="0" stop-color="#f2fbff"/><stop offset=".6" stop-color="#b9e2fb"/><stop offset="1" stop-color="#a2d2f2"/></radialGradient><linearGradient id="gGold" x1="0" y1="0" x2="0" y2="1"><stop offset="0" stop-color="#8a5a10"/><stop offset=".3" stop-color="#ffc860"/><stop offset=".6" stop-color="#e89820"/><stop offset="1" stop-color="#7a4a08"/></linearGradient><linearGradient id="gOr" x1="0" y1="0" x2="1" y2="1"><stop offset="0" stop-color="#ffc92a"/><stop offset=".5" stop-color="#ffa030"/><stop offset="1" stop-color="#f07c10"/></linearGradient><linearGradient id="gCabL" x1="0" y1="0" x2="1" y2="1"><stop offset="0" stop-color="#2f6fe2"/><stop offset=".6" stop-color="#62a4f6"/><stop offset="1" stop-color="#c4e6ff"/></linearGradient><linearGradient id="gCabT" x1="0" y1="0" x2="1" y2="1"><stop offset="0" stop-color="#6eb0fa"/><stop offset=".6" stop-color="#4a8cf0"/><stop offset="1" stop-color="#3576e6"/></linearGradient><linearGradient id="gBud" x1="0" y1="0" x2="0" y2="1"><stop offset="0" stop-color="#a8d2f8"/><stop offset=".5" stop-color="#6cacec"/><stop offset="1" stop-color="#b4dcfa"/></linearGradient><radialGradient id="gClock" cx=".5" cy=".5" r=".5"><stop offset="0" stop-color="#e6f5ff"/><stop offset=".55" stop-color="#c0e0f8"/><stop offset=".85" stop-color="#8abcf2"/><stop offset="1" stop-color="#5a96ee"/></radialGradient><linearGradient id="gYel" x1="0" y1="0" x2="0" y2="1"><stop offset="0" stop-color="#fff0a0"/><stop offset=".5" stop-color="#f6cc3c"/><stop offset="1" stop-color="#a07810"/></linearGradient><linearGradient id="gRedA" x1="0" y1="0" x2="1" y2="1"><stop offset="0" stop-color="#b80000"/><stop offset=".5" stop-color="#f41818"/><stop offset="1" stop-color="#c00000"/></linearGradient><linearGradient id="gYel2" x1="1" y1="0" x2="0" y2="1"><stop offset="0" stop-color="#fff4b0"/><stop offset=".45" stop-color="#f8d040"/><stop offset="1" stop-color="#b08410"/></linearGradient><linearGradient id="gBluA" x1="0" y1="0" x2="1" y2="1"><stop offset="0" stop-color="#0814a8"/><stop offset=".5" stop-color="#1a50f0"/><stop offset="1" stop-color="#0814a8"/></linearGradient><linearGradient id="gAbout" x1="0" y1="0" x2="0" y2="1"><stop offset="0" stop-color="#b4d0fa"/><stop offset=".45" stop-color="#7aa8f4"/><stop offset=".5" stop-color="#4a84ec"/><stop offset="1" stop-color="#5c98f2"/></linearGradient></defs></svg>
<svg style="left:27px;top:27px" width="32" height="32" viewBox="0 0 32 32"><polygon points="9.3,1.4 22.7,1.4 30.6,9.3 30.6,22.7 22.7,30.6 9.3,30.6 1.4,22.7 1.4,9.3" fill="url(#gRed)" stroke="#b40000" stroke-width="1.6" stroke-linejoin="round"/><path d="M9.6 10 L22.4 22.6 M22.4 10 L9.6 22.6" stroke="#fff" stroke-width="4.4" stroke-linecap="butt"/></svg>
<svg style="left:115.5px;top:26px" width="32" height="32" viewBox="0 0 32 32"><defs><radialGradient id="gGlobe2" cx=".5" cy=".58" r=".52"><stop offset="0" stop-color="#1b3590"/><stop offset=".7" stop-color="#2848ae"/><stop offset=".9" stop-color="#4a66c4"/><stop offset="1" stop-color="#93a4de"/></radialGradient><linearGradient id="gGlobeHi" x1="0" y1="0" x2="0" y2="1"><stop offset="0" stop-color="#fff" stop-opacity=".95"/><stop offset=".6" stop-color="#dfe6fa" stop-opacity=".75"/><stop offset="1" stop-color="#a9b8ea" stop-opacity="0"/></linearGradient></defs><circle cx="16" cy="13" r="11.7" fill="url(#gGlobe2)"/><path d="M5.4 8.2 C8 2.8 13 1.2 16 1.3 C20 1.3 25 3.4 26.8 8.6 C22 12.4 10 12.6 5.4 8.2 Z" fill="url(#gGlobeHi)"/><path d="M13.2 6.2 L16 3.4 L20.4 2.8 L24.6 5.6 L26.4 9.4 L25.4 12 L23.4 14.4 L22.6 17.6 L20.6 19.4 L19 16 L18.8 12.6 L16.4 12 L14 10.6 L12.4 8.2 Z" fill="#f6f8ff" opacity=".93"/><path d="M5 8.6 L8.8 12.6 L5.4 15.4 C4.6 13 4.6 10.6 5 8.6 Z" fill="#c4d4f8" opacity=".9"/><path d="M6.6 6.4 L9.6 8 L8 9.6 Z" fill="#1a308a" opacity=".8"/><rect x="15.1" y="24.8" width="1.9" height="3.8" fill="#f0f0f4"/><rect x="6.5" y="28.5" width="19" height="1.7" fill="#dcdce0"/><rect x="6.5" y="30.1" width="19" height=".9" fill="#7c7c80"/><rect x="12.6" y="27.9" width="6.6" height="3.3" fill="#e4e4e8" stroke="#8a8a90" stroke-width=".5"/></svg>
<svg style="left:193.5px;top:26px" width="36" height="36" viewBox="0 0 36 36"><path d="M18.2 17.4 L21.6 20.6" stroke="#5a5a6a" stroke-width="2.2"/><g transform="rotate(42.5 20.4 19.4)"><rect x="20.4" y="16.5" width="15.6" height="5.8" rx="2" fill="url(#gGold)" stroke="#6a3c04" stroke-width=".6"/></g><circle cx="11" cy="10.4" r="9.5" fill="url(#gLens)" stroke="#9cc4e0" stroke-width=".9"/><path d="M19.9 13.6 A9.5 9.5 0 0 1 14.6 19.2" stroke="#4a4e68" stroke-width="1.3" fill="none"/><path d="M4.6 7.6 A7 7 0 0 1 11.6 3.4 A5.2 5.2 0 0 1 6.6 10.4 Z" fill="#fff" opacity=".55"/><path d="M12 4 A6.4 6.4 0 0 1 13 12" stroke="#e8f6ff" stroke-width="1.1" fill="none" opacity=".8"/></svg>
<svg style="left:271.5px;top:26px" width="34" height="33" viewBox="0 0 34 33"><path d="M10.6 5.4 L20 1 L20.5 3.6 C25 4.6 28.6 8 30.2 13 L30.4 20.5 L24.7 20.5 L24.7 15.2 C24 12.6 22 10.8 19.2 9.8 L18.6 12.7 Z" fill="url(#gOr)" stroke="#a85200" stroke-width="1.1" stroke-linejoin="round"/><path d="M10.6 5.4 L20 1 L20.5 3.6 C25 4.6 28.6 8 30.2 13 L30.4 20.5 L24.7 20.5 L24.7 15.2 C24 12.6 22 10.8 19.2 9.8 L18.6 12.7 Z" transform="rotate(180 16.6 16.5)" fill="url(#gOr)" stroke="#a85200" stroke-width="1.1" stroke-linejoin="round"/><path d="M13.5 5.6 L19 3.4 C23 4.6 26.6 7.6 28.2 12" stroke="#ffe07a" stroke-width="1.1" fill="none" opacity=".8"/><path d="M4.6 14 C5 19 8 23 13 25.4" stroke="#ffd060" stroke-width="1.1" fill="none" opacity=".7"/></svg>
<svg style="left:350px;top:26px" width="32" height="33" viewBox="0 0 32 33"><polygon points="18.2,0.6 29.7,7.8 29.7,24.3 12.3,31.4 1.2,23.4 1.2,7.3" fill="#3878ea" stroke="#0a1e82" stroke-width="1.3" stroke-linejoin="round"/><polygon points="18.2,1 29.2,7.9 12.7,16.6 1.8,7.5" fill="url(#gCabT)"/><polygon points="1.8,8 12.5,17 12.2,30.6 1.8,23" fill="url(#gCabL)"/><polygon points="13.2,17.2 29.1,8.6 29.1,24 13,30.6" fill="#2f6ce0"/><polygon points="14.4,18.2 27.8,11.2 27.8,16.4 14.4,23.2" fill="#84bdfc" stroke="#0a1e82" stroke-width=".7"/><polygon points="14.4,24.4 27.8,17.6 27.8,23 14.4,29.4" fill="#84bdfc" stroke="#0a1e82" stroke-width=".7"/><path d="M15 19.4 L21 16.3 M15 25.6 L21 22.6" stroke="#d8eeff" stroke-width="1" opacity=".8"/><path d="M21.4 17.4 L25 15.5 M21.4 23.6 L25 21.8" stroke="#123098" stroke-width="1.7"/><path d="M1.8 7.6 L12.7 16.7 L12.4 30.6" stroke="#d6ecff" stroke-width=".9" fill="none"/></svg>
<svg style="left:427.5px;top:26px" width="32" height="32" viewBox="0 0 32 32"><path d="M11.6 14.8 L21.2 14.8 C24.6 17 27 21 27.7 25.4 C28.2 28.8 25.4 30 22 30.2 L10.6 30.2 C7.6 30 4.9 28.8 5.4 25.4 C6 21 8.4 17 11.6 14.8 Z" fill="url(#gBud)" stroke="#4a80c4" stroke-opacity=".6" stroke-width=".8"/><circle cx="16.5" cy="8.4" r="7.7" fill="url(#gBud)" stroke="#4a80c4" stroke-opacity=".55" stroke-width=".8"/><ellipse cx="16.5" cy="11.6" rx="4.6" ry="3" fill="#c8ecff" opacity=".6"/><ellipse cx="16.5" cy="26.5" rx="7" ry="3" fill="#d0eeff" opacity=".45"/><path d="M11.4 15.2 C14 16.6 19 16.6 21.4 15.2" stroke="#3c70b8" stroke-width=".9" fill="none" opacity=".7"/></svg>
<svg style="left:505.5px;top:25.5px" width="32" height="32" viewBox="0 0 32 32"><circle cx="15.6" cy="15.5" r="14" fill="#f4f4fa" stroke="#9a9ab4" stroke-width="2.3"/><circle cx="15.6" cy="15.5" r="11.9" fill="url(#gClock)" stroke="#a4a8c4" stroke-width=".9"/><rect x="14.8" y="5" width="1.6" height="1.4" fill="#445"/><rect x="14.8" y="24.5" width="1.6" height="1.4" fill="#667"/><rect x="4.8" y="14.8" width="1.6" height="1.5" fill="#2a5ce0"/><rect x="24.8" y="14.8" width="1.6" height="1.5" fill="#2a5ce0"/><path d="M15 15.4 L21.2 9.4" stroke="#0a0c14" stroke-width="2" stroke-linecap="round"/><path d="M15 15.9 L20.6 15.9" stroke="#0a0c14" stroke-width="1.7" stroke-linecap="round"/><circle cx="14.7" cy="15.7" r="1.8" fill="#fff" stroke="#0a0c14" stroke-width="1.3"/></svg>
<svg style="left:595.5px;top:26px" width="32" height="32" viewBox="0 0 32 32"><path d="M26.2 1.2 C23.6 1.8 22.6 4 23.4 6 L9.4 19.6 C6.6 18.6 2.6 19.6 1 22.4 L4.8 23.2 L6 26.4 L3.4 29.4 C6.6 31 10.4 29.6 11.2 26.2 C11.5 25 11.4 24 11 23 L24.8 9.2 C27.2 9.8 30 8.6 30.4 5 L27.6 6.2 L25.2 4.2 Z" fill="#fbfbfb" stroke="#333" stroke-width=".8" stroke-dasharray="1.7 .6"/><path d="M1.2 22.4 L4.8 23.2 L6 26.4 L3.4 29.4 C6.6 31 10.4 29.6 11.2 26.2 C11.5 25 11.4 24 11 23 L12.6 21.4" fill="none" stroke="#1c1c1c" stroke-width="1"/><path d="M11 23 L22 12" stroke="#222" stroke-width=".9"/><path d="M3.4 3.2 L15.4 15" stroke="#4a4a4a" stroke-width="2.1"/><path d="M3.2 2.6 L15.2 14.4" stroke="#e8e8e8" stroke-width=".8"/><path d="M4 4 L14 14" stroke="#222" stroke-width=".7" stroke-dasharray="1 1"/><path d="M15.2 14.2 L17.4 13.2 L30.6 26.4 C31.8 28 31.4 29.6 30.4 30.4 C29 31 27.8 30.6 26.8 29.6 L14.8 16.8 Z" fill="url(#gYel2)" stroke="#6a5008" stroke-width=".5"/></svg>
<svg style="left:673.5px;top:26px" width="33" height="33" viewBox="0 0 33 33"><polygon points="0.7,8 0.7,22.4 15.3,22.4 11.5,17.5 23.3,5.2 17.9,0.2 5.6,11.8" fill="url(#gRedA)" stroke="#8c0000" stroke-width=".9" stroke-linejoin="round"/><path d="M3 13 L3 20.4 L10 20.4 L8.4 17.6 L20 6 L18 4.2 L6 15.4 Z" fill="#ff8a8a" opacity=".42"/><polygon points="32.3,8.3 19.1,8.3 22.4,13.5 8.5,27.1 13.9,31.8 28,19.1 32.3,22.9" fill="url(#gBluA)" stroke="#060c78" stroke-width=".9" stroke-linejoin="round"/><path d="M12 27.6 L25.4 14.6 L23.6 11 L30 10.4 L30 17.4 L27.6 15.6 L14.2 29 Z" fill="#3c9cff" opacity=".5"/></svg>
<svg style="left:751.5px;top:26px" width="33" height="33" viewBox="0 0 33 33"><circle cx="16.5" cy="16" r="14.2" fill="url(#gAbout)" stroke="#1e5ce0" stroke-width="2"/><path d="M4.6 12.6 C7 5.6 13 3.2 17.5 3.4 C23 3.6 27.4 7.4 28.4 12 C22 9.4 12 9.8 4.6 12.6 Z" fill="#fff" opacity=".35"/><text x="16.4" y="26.8" text-anchor="middle" font-family="DejaVu Sans, Liberation Sans, sans-serif" font-size="28.5" fill="#fff" stroke="#fff" stroke-width="1.1" stroke-linejoin="round">?</text></svg>
<svg style="left:318px;top:820px" width="16" height="18" viewBox="0 0 16 18"><defs><radialGradient id="gGrn" cx=".4" cy=".35" r=".7"><stop offset="0" stop-color="#8be0a8"/><stop offset=".5" stop-color="#2aa85a"/><stop offset="1" stop-color="#12803c"/></radialGradient></defs><path d="M9.5 6.5 C12 5.2 14.6 6 14.8 8.4 L14.8 12.6 L12 13.6 L12 15.4 L9 16 Z" fill="#1c9048" stroke="#0a5a26" stroke-width=".8"/><path d="M1.4 16.4 L1.4 10.6 C1.6 8 4.4 6.6 7.6 6.6 C10.6 6.6 12.4 8 12.4 10.4 L12.2 15 L9.4 16.4 Z" fill="url(#gGrn)" stroke="#0a5a26" stroke-width=".9"/><path d="M4.6 16.2 L4.6 11.4 M8.6 16.2 L8.6 12" stroke="#0a5a26" stroke-width=".6"/><path d="M6.4 10.4 L6.4 15.6" stroke="#b4f0c8" stroke-width="1.3"/><circle cx="7.7" cy="4.6" r="3.7" fill="url(#gGrn)" stroke="#0a5a26" stroke-width=".8"/></svg>
<svg style="left:665px;top:820px" width="16" height="18" viewBox="0 0 16 18"><polygon points="9.5,0.8 14.2,5.7 4.9,5.7" fill="#22d022" stroke="#0c7a0c" stroke-width=".8"/><path d="M9.6 5.6 L9.6 9.4 L8.4 9.4" stroke="#1a1a1a" stroke-width="1" fill="none"/><rect x="4.2" y="7.8" width="2.6" height="3.4" fill="#1a1a1a"/><polygon points="1,11.2 10.2,11.2 5.5,17" fill="#22d022" stroke="#0c7a0c" stroke-width=".8"/><path d="M2.6 13.4 L5.5 15.6 L8.6 13.4" stroke="#0c7a0c" stroke-width=".9" fill="none"/><path d="M7 4.6 L9.5 3 L12 4.6" stroke="#0c7a0c" stroke-width=".9" fill="none"/></svg>
<svg style="left:881px;top:821px" width="17" height="17" viewBox="0 0 17 17"><defs><radialGradient id="gEarth" cx=".35" cy=".3" r=".8"><stop offset="0" stop-color="#58d0f8"/><stop offset=".5" stop-color="#2a80d0"/><stop offset="1" stop-color="#0c3c90"/></radialGradient></defs><circle cx="8.1" cy="8" r="7.4" fill="url(#gEarth)" stroke="#082a50" stroke-width="1.1"/><path d="M7.2 5.4 C9 6 9.6 7.6 9 9.6 C10.4 10.6 9.6 12.4 8 12 C7 10.6 6.6 8 7.2 5.4 Z" fill="#2cb860" opacity=".85"/><polygon points="1.4,7.8 6.6,7.8 6.6,13.4 5,11.8 2.4,14 1,12.4 3.4,10.2" fill="#32d832" stroke="#0a500a" stroke-width=".8"/><polygon points="15,1.8 15,7.4 9.8,7.4 11.8,5.6 9.6,3.2 11.2,1.8 13.4,3.8" fill="#32d832" stroke="#0a500a" stroke-width=".8"/></svg>
</div></body></html>
